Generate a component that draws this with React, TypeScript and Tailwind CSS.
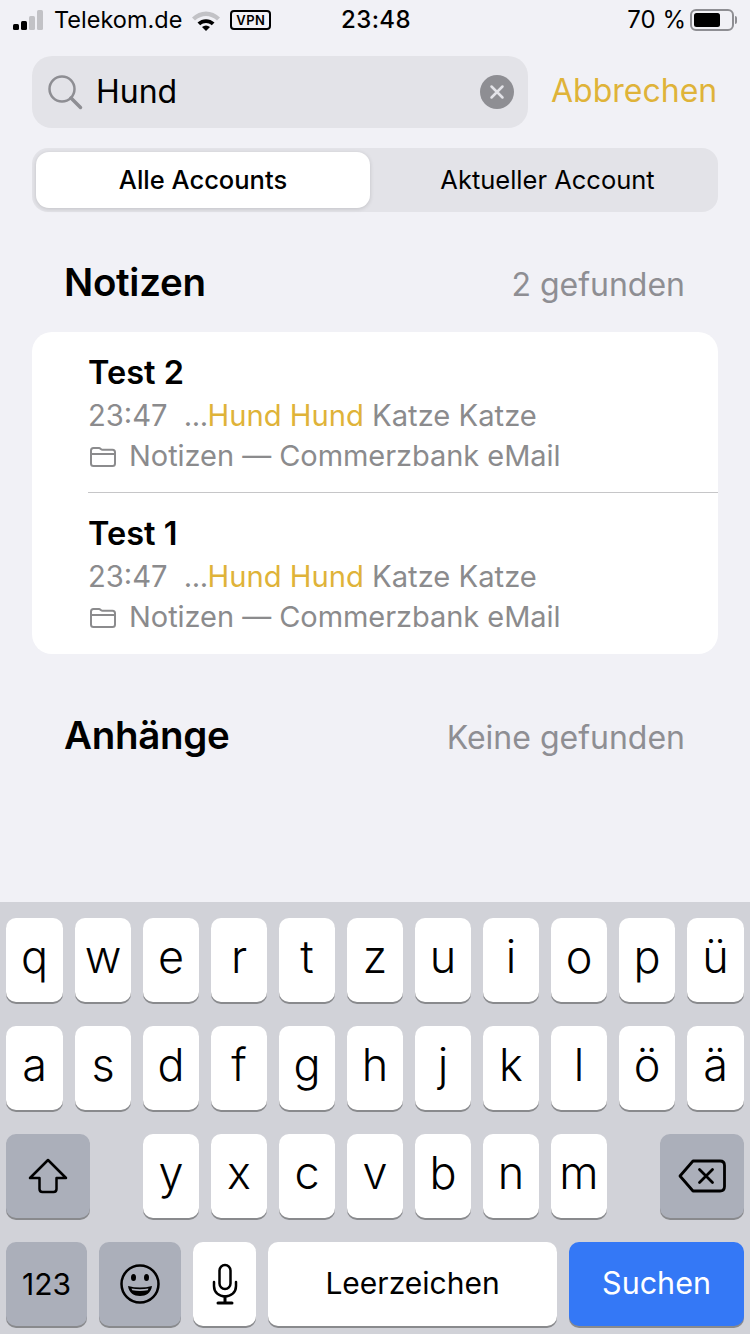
import React from 'react';

const font = "font-['Inter','Noto_Sans',sans-serif]";

const Key = ({ label, className = '' }: { label: React.ReactNode; className?: string }) => (
  <div
    className={`flex h-[84px] items-center justify-center rounded-[10px] bg-white text-black shadow-[0_2px_0_#898a8d] ${className}`}
  >
    {label}
  </div>
);

const LetterRow = ({ keys, wide = false }: { keys: string[]; wide?: boolean }) => (
  <>
    {keys.map((k, i) => (
      <Key
        key={k}
        label={<span className="pb-[8px] text-[45px] leading-none font-light">{k}</span>}
        className={wide && (i === 0 || i === keys.length - 1) ? 'w-[57px]' : 'w-[56px]'}
      />
    ))}
  </>
);

const FolderIcon = () => (
  <svg width="28" height="24" viewBox="0 0 28 24" fill="none" stroke="#8b8b8d" strokeWidth="2">
    <path d="M2 6.500c0-1.700 1-2.500 2.500-2.500h5.500c1.500 0 2 1.800 3.500 1.800h10c1.700 0 2.500 1 2.500 2.500v11.200c0 1.500-.8 2.500-2.500 2.500h-19c-1.500 0-2.500-1-2.500-2.500z" />
    <path d="M2 10h24" />
  </svg>
);

const NoteRow = ({ title }: { title: string }) => (
  <div className="h-[160px] pl-[57px]">
    <div className="-ml-[1px] pt-[21px] text-[32.500px] leading-[40px] font-semibold text-black">{title}</div>
    <div className="mt-[4px] -ml-[1px] text-[29.200px] leading-[38px] whitespace-nowrap text-[#8b8b8d]">
      23:47 <span className="ml-[8px] tracking-[-0.5px]">...</span>
      <span className="text-[#dfb339]">Hund Hund</span> Katze Katze
    </div>
    <div className="mt-[2px] flex items-center gap-[12px] text-[29px] leading-[38px] tracking-[-0.05px] whitespace-nowrap text-[#8b8b8d]">
      <FolderIcon />
      <span>Notizen — Commerzbank eMail</span>
    </div>
  </div>
);

const StatusBar = () => (
  <div className="flex h-[40px] items-center justify-between pr-[13px] pl-[13px] text-[24px] text-black">
    <div className="flex items-center">
      <div className="flex items-end gap-[2px]">
        <div className="h-[6px] w-[6px] rounded-[1.500px] bg-black" />
        <div className="h-[9px] w-[6px] rounded-[1.500px] bg-black" />
        <div className="h-[14px] w-[6px] rounded-[1.500px] bg-[#c2c2c6]" />
        <div className="h-[20px] w-[6px] rounded-[1.500px] bg-[#c2c2c6]" />
      </div>
      <span className="ml-[11px] text-[23.500px] leading-none">Telekom.de</span>
      <svg className="ml-[9px]" width="30" height="22" viewBox="0 0 30 22">
        <path d="M1 8.500C9 .5 21 .5 29 8.500l-3 3C19.500 5.500 10.500 5.500 4 11.500z" fill="#c2c2c6" />
        <path d="M6.500 13.500c5-4.500 12-4.500 17 0l-2.700 2.800c-3.500-3-8.100-3-11.600 0z" fill="#000" />
        <path d="M11 18c2.500-2 5.500-2 8 0l-4 4z" fill="#000" />
      </svg>
      <span className="ml-[9px] flex h-[20px] w-[41px] items-center justify-center rounded-[4px] border-2 border-black text-[13px] leading-none font-semibold tracking-[0.5px]">
        VPN
      </span>
    </div>
    <span className="absolute left-[341px] text-[24px] leading-none font-medium tracking-[0.4px]">23:48</span>
    <div className="flex items-center gap-[4px]">
      <span className="leading-none">70 %</span>
      <div className="flex items-center">
        <div className="flex h-[22px] w-[44px] items-center rounded-[6px] border-2 border-[#8e8e93] p-[2px]">
          <div className="h-[14px] w-[26px] rounded-[2.500px] bg-black" />
        </div>
        <div className="ml-[1px] h-[8px] w-[2px] rounded-r-full bg-[#8e8e93]" />
      </div>
    </div>
  </div>
);

const SectionHeader = ({ title, right }: { title: string; right: string }) => (
  <div className="flex h-[44px] items-center justify-between pr-[65px] pl-[64px]">
    <span className="pb-[1px] text-[38.500px] leading-[43px] font-semibold tracking-[-0.3px] text-black">{title}</span>
    <span className="pt-[4px] text-[32px] leading-[40px] text-[#8e8e93]">{right}</span>
  </div>
);

export default function App() {
  return (
    <div className={`flex h-[1334px] w-[750px] flex-col overflow-hidden bg-[#f1f1f6] ${font}`}>
      <StatusBar />

      <div className="mt-[16px] flex items-center px-[32px]">
        <div className="flex h-[72px] w-[496px] items-center rounded-[20px] bg-[#e3e3e8] pr-[14px] pl-[15px]">
          <svg width="36" height="36" viewBox="0 0 36 36" fill="none" stroke="#8e8e93">
            <circle cx="15" cy="15" r="12.500" strokeWidth="2.500" />
            <path d="M24 24l9.500 9.500" strokeWidth="3.500" strokeLinecap="round" />
          </svg>
          <span className="ml-[13px] flex-1 text-[32px] leading-none text-black">Hund</span>
          <div className="flex h-[34px] w-[34px] items-center justify-center rounded-full bg-[#8e8e93]">
            <svg width="16" height="16" viewBox="0 0 16 16" stroke="#e3e3e8" strokeWidth="2.500" strokeLinecap="round">
              <path d="M2.500 2.500l11 11M13.500 2.500l-11 11" />
            </svg>
          </div>
        </div>
        <span className="ml-[23px] pb-[3px] text-[32px] leading-none text-[#dfb339]">Abbrechen</span>
      </div>

      <div className="mx-[32px] mt-[20px] flex h-[64px] rounded-[16px] bg-[#e3e3e8] p-[4px]">
        <div className="flex h-[56px] w-[334px] items-center justify-center rounded-[13px] bg-white text-[25.500px] font-medium text-black shadow-[0_1px_4px_rgba(0,0,0,0.15)]">
          Alle Accounts
        </div>
        <div className="flex flex-1 items-center justify-center pt-[1px] pl-[11px] text-[25.500px] text-black">Aktueller Account</div>
      </div>

      <div className="mt-[49px]">
        <SectionHeader title="Notizen" right="2 gefunden" />
      </div>

      <div className="mx-[32px] mt-[27px] h-[322px] rounded-[20px] bg-white">
        <NoteRow title="Test 2" />
        <div className="ml-[56px] h-px bg-[#c6c6c8]" />
        <NoteRow title="Test 1" />
      </div>

      <div className="mt-[60px]">
        <SectionHeader title="Anhänge" right="Keine gefunden" />
      </div>

      <div className="mt-auto h-[432px] bg-[#d1d2d8] px-[6px] pt-[16px]">
        <div className="flex gap-[12px]">
          <LetterRow wide keys={['q', 'w', 'e', 'r', 't', 'z', 'u', 'i', 'o', 'p', 'ü']} />
        </div>
        <div className="mt-[24px] flex gap-[12px]">
          <LetterRow wide keys={['a', 's', 'd', 'f', 'g', 'h', 'j', 'k', 'l', 'ö', 'ä']} />
        </div>
        <div className="mt-[24px] flex">
          <Key
            className="w-[84px] !bg-[#abafba]"
            label={
              <svg width="40" height="36" viewBox="0 0 40 36" fill="none" stroke="#000" strokeWidth="2.500" strokeLinejoin="round">
                <path d="M20 2L2 20h9.500v11c0 2 1 3 3 3h11c2 0 3-1 3-3V20H38z" />
              </svg>
            }
          />
          <div className="ml-[53px] flex gap-[12px]">
            <LetterRow keys={['y', 'x', 'c', 'v', 'b', 'n', 'm']} />
          </div>
          <Key
            className="ml-auto w-[84px] !bg-[#abafba]"
            label={
              <svg width="48" height="34" viewBox="0 0 48 34" fill="none" stroke="#000" strokeWidth="2.800" strokeLinejoin="round" strokeLinecap="round">
                <path d="M15 2h27c3 0 4.500 1.500 4.500 4.500v21c0 3-1.500 4.500-4.500 4.500H15L2 17z" />
                <path d="M21.500 10.500l13 13M34.500 10.500l-13 13" />
              </svg>
            }
          />
        </div>
        <div className="mt-[24px] flex gap-[12px]">
          <Key className="w-[81px] !bg-[#abafba]" label={<span className="text-[30px]">123</span>} />
          <Key
            className="w-[82px] !bg-[#abafba]"
            label={
              <svg width="42" height="42" viewBox="0 0 42 42" fill="none" stroke="#000" strokeWidth="2.500">
                <circle cx="21" cy="21" r="18.500" />
                <ellipse cx="14.500" cy="14.500" rx="2.500" ry="3.500" fill="#000" stroke="none" />
                <ellipse cx="27.500" cy="14.500" rx="2.500" ry="3.500" fill="#000" stroke="none" />
                <path d="M9 23c8 2 16 2 24 0-1 7-6 10-12 10S10 30 9 23z" fill="#000" stroke="none" />
                <path d="M12.500 25.500c5.500 1 11.500 1 17 0l-.8 1.800c-5 .8-10.400.8-15.400 0z" fill="#abafba" stroke="none" />
              </svg>
            }
          />
          <Key
            className="w-[63px]"
            label={
              <svg width="26" height="42" viewBox="0 0 26 42" fill="none" stroke="#000" strokeWidth="2.500" strokeLinecap="round">
                <rect x="7.500" y="2" width="11" height="24" rx="5.500" />
                <path d="M2 19v4c0 6.500 5 10.500 11 10.500S24 29.500 24 23v-4" />
                <path d="M13 33.500V39M6 40h14" strokeWidth="3" />
              </svg>
            }
          />
          <Key className="w-[289px]" label={<span className="pb-[2px] text-[30px]">Leerzeichen</span>} />
          <Key className="flex-1 !bg-[#3478f6] !text-white" label={<span className="pb-[2px] text-[30.500px]">Suchen</span>} />
        </div>
      </div>
    </div>
  );
}
